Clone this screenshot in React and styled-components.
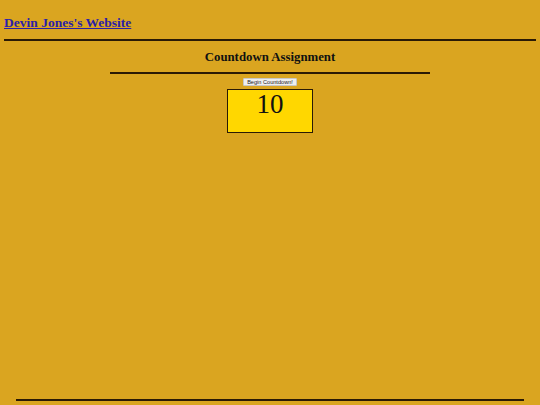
import React, { useState, useEffect } from "react";
import styled, { createGlobalStyle } from "styled-components";

const GlobalStyle = createGlobalStyle`
  html, body {
    margin: 0;
    padding: 0;
    background-color: #daa520;
    font-family: "Liberation Serif", "Times New Roman", serif;
  }
`;

const Page = styled.div`
  display: flex;
  flex-direction: column;
  min-height: 405px;
  box-sizing: border-box;
  padding: 0 4px 4px;
`;

const Header = styled.header`
  padding-top: 13px;
  padding-bottom: 8px;
  border-bottom: 2px solid #2a1a05;
`;

const SiteLink = styled.a`
  font-size: 13.5px;
  font-weight: bold;
  color: #2b1fa8;
  text-decoration: underline;
  line-height: 16px;
  display: inline-block;
`;

const Main = styled.main`
  flex: 1;
  display: flex;
  flex-direction: column;
  align-items: center;
`;

const Title = styled.h2`
  margin: 9px 0 0;
  font-size: 12.8px;
  line-height: 15px;
  font-weight: bold;
  color: #111;
  width: 320px;
  text-align: center;
  padding-bottom: 7px;
  border-bottom: 2px solid #2a1a05;
`;

const StartButton = styled.button`
  margin-top: 4px;
  font-family: "Liberation Sans", Arial, sans-serif;
  font-size: 5.6px;
  line-height: 6px;
  padding: 0 3px;
  height: 8px;
  background: #efefef;
  border: 1px solid #c8c8c8;
  border-radius: 1px;
  color: #222;
`;

const Counter = styled.div`
  margin-top: 3px;
  width: 84px;
  height: 42px;
  background-color: #ffd700;
  border: 1px solid #2a1a05;
  text-align: center;
  font-size: 27px;
  line-height: 28px;
  color: #111;
`;

const Footer = styled.footer`
  margin: 0 12px;
  border-top: 2px solid #2a1a05;
`;

export default function App() {
  const [count, setCount] = useState(10);
  const [running, setRunning] = useState(false);

  useEffect(() => {
    if (!running || count <= 0) return;
    const id = setTimeout(() => setCount((c) => c - 1), 1000);
    return () => clearTimeout(id);
  }, [running, count]);

  return (
    <>
      <GlobalStyle />
      <Page>
        <Header>
          <SiteLink href="#">Devin Jones's Website</SiteLink>
        </Header>
        <Main>
          <Title>Countdown Assignment</Title>
          <StartButton onClick={() => { setCount(10); setRunning(true); }}>
            Begin Countdown!
          </StartButton>
          <Counter>{count}</Counter>
        </Main>
        <Footer />
      </Page>
    </>
  );
}
